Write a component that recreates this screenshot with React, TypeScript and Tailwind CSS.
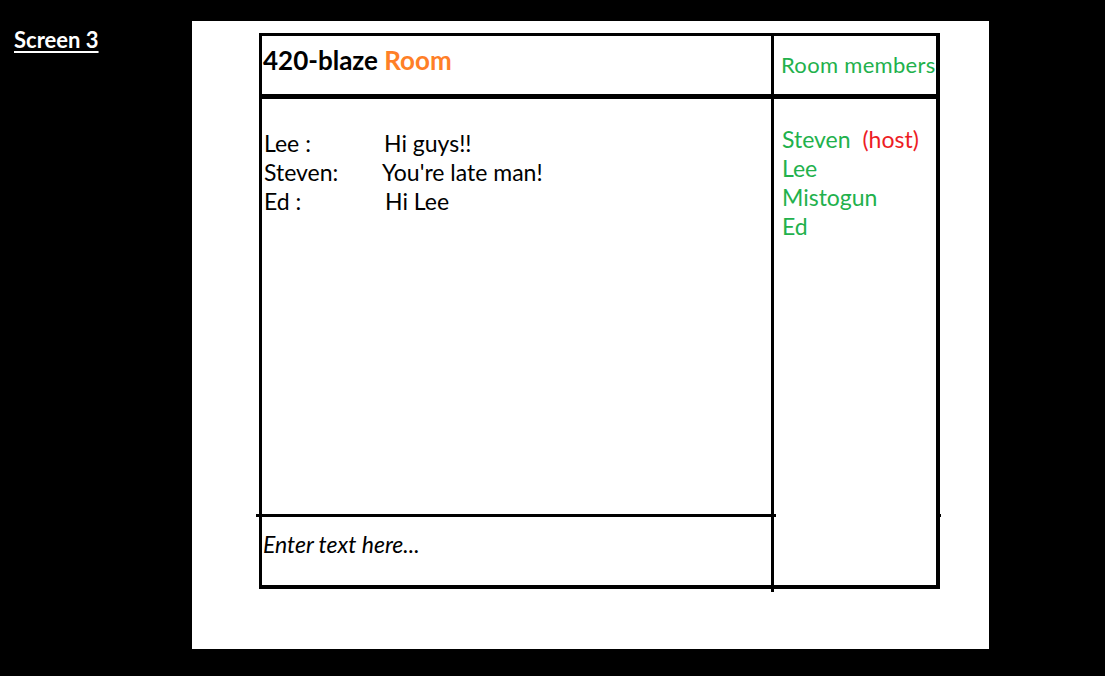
import React from 'react';

const messages = [
  { name: 'Lee :', text: 'Hi guys!!', shift: 'ml-[120px]' },
  { name: 'Steven:', text: "You're late man!", shift: 'ml-[118px]' },
  { name: 'Ed :', text: 'Hi Lee', shift: 'ml-[121px]' },
];

const members = ['Lee', 'Mistogun', 'Ed'];

const App = () => {
  return <div className="w-[1105px] h-[676px] bg-black flex pt-[21px] font-['Lato',sans-serif]">
      <div className="w-[192px] pl-[14px]">
        <div className="mt-[6px] text-[22px] leading-[26px] font-bold text-white underline decoration-2 underline-offset-[3px]">
          Screen 3
        </div>
      </div>
      <div className="w-[797px] h-[628px] bg-white pl-[67px] pt-[12px]">
        <div className="w-[681px] h-[556px] border-t-[3px] border-l-[3px] border-r-4 border-b-4 border-black flex">
          {/* chat column */}
          <div className="w-[509px] flex flex-col">
            <div className="h-[63px] border-b-[5px] border-black pl-[1px] pt-[8px]">
              <h1 className="text-[26px] leading-[32px] font-bold text-black">
                420-blaze <span className="text-[#ff7f27]">Room</span>
              </h1>
            </div>
            <div className="h-[415px] pt-[30px] pl-[2px] text-[23px] leading-[29px] text-black">
              {messages.map(m => <div key={m.name} className="flex">
                  <span className="w-0 whitespace-nowrap">{m.name}</span>
                  <span className={m.shift}>{m.text}</span>
                </div>)}
            </div>
            <div className="h-[3px] bg-black -ml-[6px] -mr-[5px]" />
            <div className="flex-1 pl-[1px] pt-[13px] text-[23px] leading-[29px] italic text-black">
              Enter text here...
            </div>
          </div>
          <div className="w-[3px] bg-black self-stretch -mb-[7px]" />
          {/* members column */}
          <div className="w-[162px] flex flex-col">
            <div className="h-[63px] border-b-[5px] border-black pl-[7px] pt-[14px]">
              <div className="text-[22px] leading-[29px] text-[#22b14c] whitespace-nowrap tracking-[0.3px]">Room members</div>
            </div>
            <div className="h-[415px] pt-[26px] pl-[8px] text-[23px] leading-[29px] text-[#22b14c]">
              <div>
                Steven <span className="ml-[6px] text-[#ed1c24]">(host)</span>
              </div>
              {members.map(m => <div key={m}>{m}</div>)}
            </div>
            <div className="self-end h-[3px] w-[5px] -mr-[5px] bg-black" />
          </div>
        </div>
      </div>
    </div>;
};

export default App;
